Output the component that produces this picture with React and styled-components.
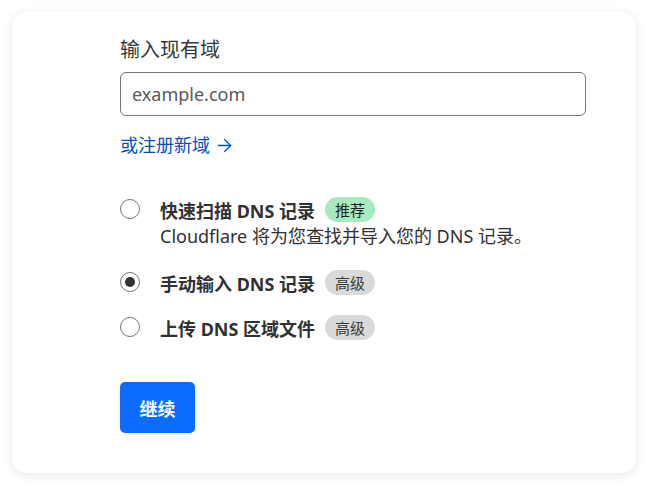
import React, { useState } from 'react'
import styled, { createGlobalStyle } from 'styled-components'
import { ArrowRight } from 'lucide-react'

const GlobalStyle = createGlobalStyle`
    body {
        margin: 0;
        background: #ffffff;
        font-family: "Noto Sans", "Noto Sans CJK SC", sans-serif;
        color: #313131;
    }
`

const options = [
    { id: 'scan', title: '快速扫描 DNS 记录', badge: '推荐', tone: 'green', desc: 'Cloudflare 将为您查找并导入您的 DNS 记录。' },
    { id: 'manual', title: '手动输入 DNS 记录', badge: '高级', tone: 'gray' },
    { id: 'upload', title: '上传 DNS 区域文件', badge: '高级', tone: 'gray' },
]

function App() {
    const [choice, setChoice] = useState('manual')
    return (
        <>
            <GlobalStyle />
            <Card>
                <Label htmlFor="domain">输入现有域</Label>
                <Input id="domain" placeholder="example.com" />
                <Link href="#">
                    或注册新域 <ArrowRight size={21} strokeWidth={1.5} />
                </Link>
                <Options>
                    {options.map((o) => (
                        <Option key={o.id} onClick={() => setChoice(o.id)}>
                            <Radio $checked={choice === o.id} />
                            <OptionBody>
                                <TitleRow>
                                    <Title>{o.title}</Title>
                                    <Badge $tone={o.tone}>{o.badge}</Badge>
                                </TitleRow>
                                {o.desc && <Desc>{o.desc}</Desc>}
                            </OptionBody>
                        </Option>
                    ))}
                </Options>
                <Button>继续</Button>
            </Card>
        </>
    )
}

const Card = styled.div`
    margin: 12px;
    width: 624px;
    box-sizing: border-box;
    padding: 24px 50px 40px 108px;
    background: #fff;
    border-radius: 16px;
    box-shadow: 0 2px 12px rgba(0, 0, 0, 0.09);
    display: flex;
    flex-direction: column;
    align-items: flex-start;
`

const Label = styled.label`
    font-size: 20px;
    line-height: 28px;
    color: #36393a;
    margin-bottom: 8px;
`

const Input = styled.input`
    width: 100%;
    height: 44px;
    box-sizing: border-box;
    border: 1px solid #767676;
    border-radius: 6px;
    padding: 0 11px;
    font-family: inherit;
    font-size: 18px;
    color: #313131;
    &::placeholder {
        color: #595959;
    }
`

const Link = styled.a`
    margin-top: 17px;
    display: flex;
    align-items: center;
    gap: 4px;
    font-size: 18px;
    line-height: 24px;
    color: #0051c3;
    text-decoration: none;
`

const Options = styled.div`
    margin-top: 40px;
    display: flex;
    flex-direction: column;
    gap: 20px;
`

const Option = styled.div`
    display: flex;
    align-items: flex-start;
    gap: 20px;
    cursor: pointer;
`

const Radio = styled.span`
    width: 20px;
    height: 20px;
    margin-top: 2px;
    box-sizing: border-box;
    border: 1px solid #757575;
    border-radius: 50%;
    display: flex;
    align-items: center;
    justify-content: center;
    flex-shrink: 0;
    &::after {
        content: "";
        width: 10px;
        height: 10px;
        border-radius: 50%;
        background: ${(p) => (p.$checked ? '#313131' : 'transparent')};
    }
`

const OptionBody = styled.div`
    display: flex;
    flex-direction: column;
`

const TitleRow = styled.div`
    display: flex;
    align-items: center;
    gap: 10px;
    height: 25px;
`

const Title = styled.span`
    font-size: 18px;
    font-weight: 700;
    color: #313131;
`

const Badge = styled.span`
    height: 25px;
    padding: 0 10px;
    border-radius: 13px;
    display: flex;
    align-items: center;
    font-size: 15px;
    color: ${(p) => (p.$tone === 'green' ? '#1d1f20' : '#36393a')};
    background: ${(p) => (p.$tone === 'green' ? '#a8e9be' : '#d9d9d9')};
`

const Desc = styled.span`
    font-size: 18px;
    line-height: 28px;
    color: #313131;
`

const Button = styled.button`
    margin-top: 42px;
    width: 75px;
    height: 51px;
    border: none;
    border-radius: 5px;
    background: #0b6cff;
    color: #fff;
    font-family: inherit;
    font-size: 18px;
    font-weight: 700;
    cursor: pointer;
`

export default App
